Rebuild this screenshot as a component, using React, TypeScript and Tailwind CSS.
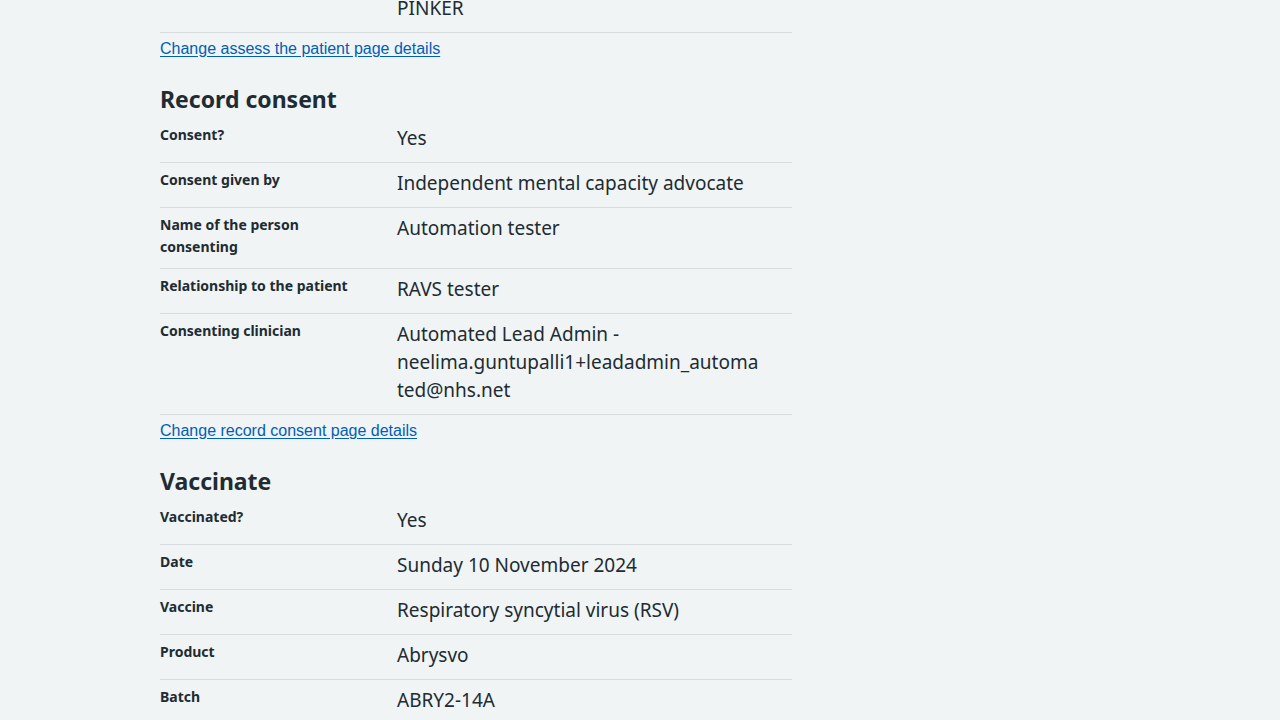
import { FC } from 'react'

type Row = { key: string; value: string[] }

const consentRows: Row[] = [
  { key: 'Consent?', value: ['Yes'] },
  { key: 'Consent given by', value: ['Independent mental capacity advocate'] },
  { key: 'Name of the person consenting', value: ['Automation tester'] },
  { key: 'Relationship to the patient', value: ['RAVS tester'] },
  {
    key: 'Consenting clinician',
    value: ['Automated Lead Admin -', 'neelima.guntupalli1+leadadmin_automa', 'ted@nhs.net'],
  },
]

const vaccinateRows: Row[] = [
  { key: 'Vaccinated?', value: ['Yes'] },
  { key: 'Date', value: ['Sunday 10 November 2024'] },
  { key: 'Vaccine', value: ['Respiratory syncytial virus (RSV)'] },
  { key: 'Product', value: ['Abrysvo'] },
  { key: 'Batch', value: ['ABRY2-14A'] },
]

const SummaryRow: FC<{ row: Row }> = ({ row }) => (
  <div className="grid grid-cols-[237px_1fr] border-b border-[#d8dde0] pt-[6px] pb-[10px]">
    <dt className="pr-6 text-[14px] leading-[22px] font-bold">{row.key}</dt>
    <dd className="text-[19px] leading-[28px]">
      {row.value.map((line, i) => (
        <span key={i} className="block">
          {line}
        </span>
      ))}
    </dd>
  </div>
)

const ChangeLink: FC<{ label: string }> = ({ label }) => (
  <a
    href="#"
    className="mt-[4px] block w-fit font-['Liberation_Sans',Arial,sans-serif] text-base leading-6 text-[#005eb8] underline underline-offset-[2px]"
  >
    {label}
  </a>
)

export default function App() {
  return (
    <div className="h-[720px] overflow-hidden bg-[#f0f4f5] font-['Noto_Sans',sans-serif] text-[#212b32] [font-variant-ligatures:none]">
      <div className="ml-[160px] w-[632px]">
        <dl className="mt-[-14px]">
          <div className="grid grid-cols-[237px_1fr] border-b border-[#d8dde0] pt-2 pb-[10px]">
            <dt />
            <dd className="text-[19px] leading-[28px]">PINKER</dd>
          </div>
        </dl>
        <ChangeLink label="Change assess the patient page details" />

        <h2 className="mt-[22px] mb-[3px] text-[23px] leading-8 font-bold">Record consent</h2>
        <dl>
          {consentRows.map((r) => (
            <SummaryRow key={r.key} row={r} />
          ))}
        </dl>
        <ChangeLink label="Change record consent page details" />

        <h2 className="mt-[22px] mb-[3px] text-[23px] leading-8 font-bold">Vaccinate</h2>
        <dl>
          {vaccinateRows.map((r) => (
            <SummaryRow key={r.key} row={r} />
          ))}
        </dl>
      </div>
    </div>
  )
}
